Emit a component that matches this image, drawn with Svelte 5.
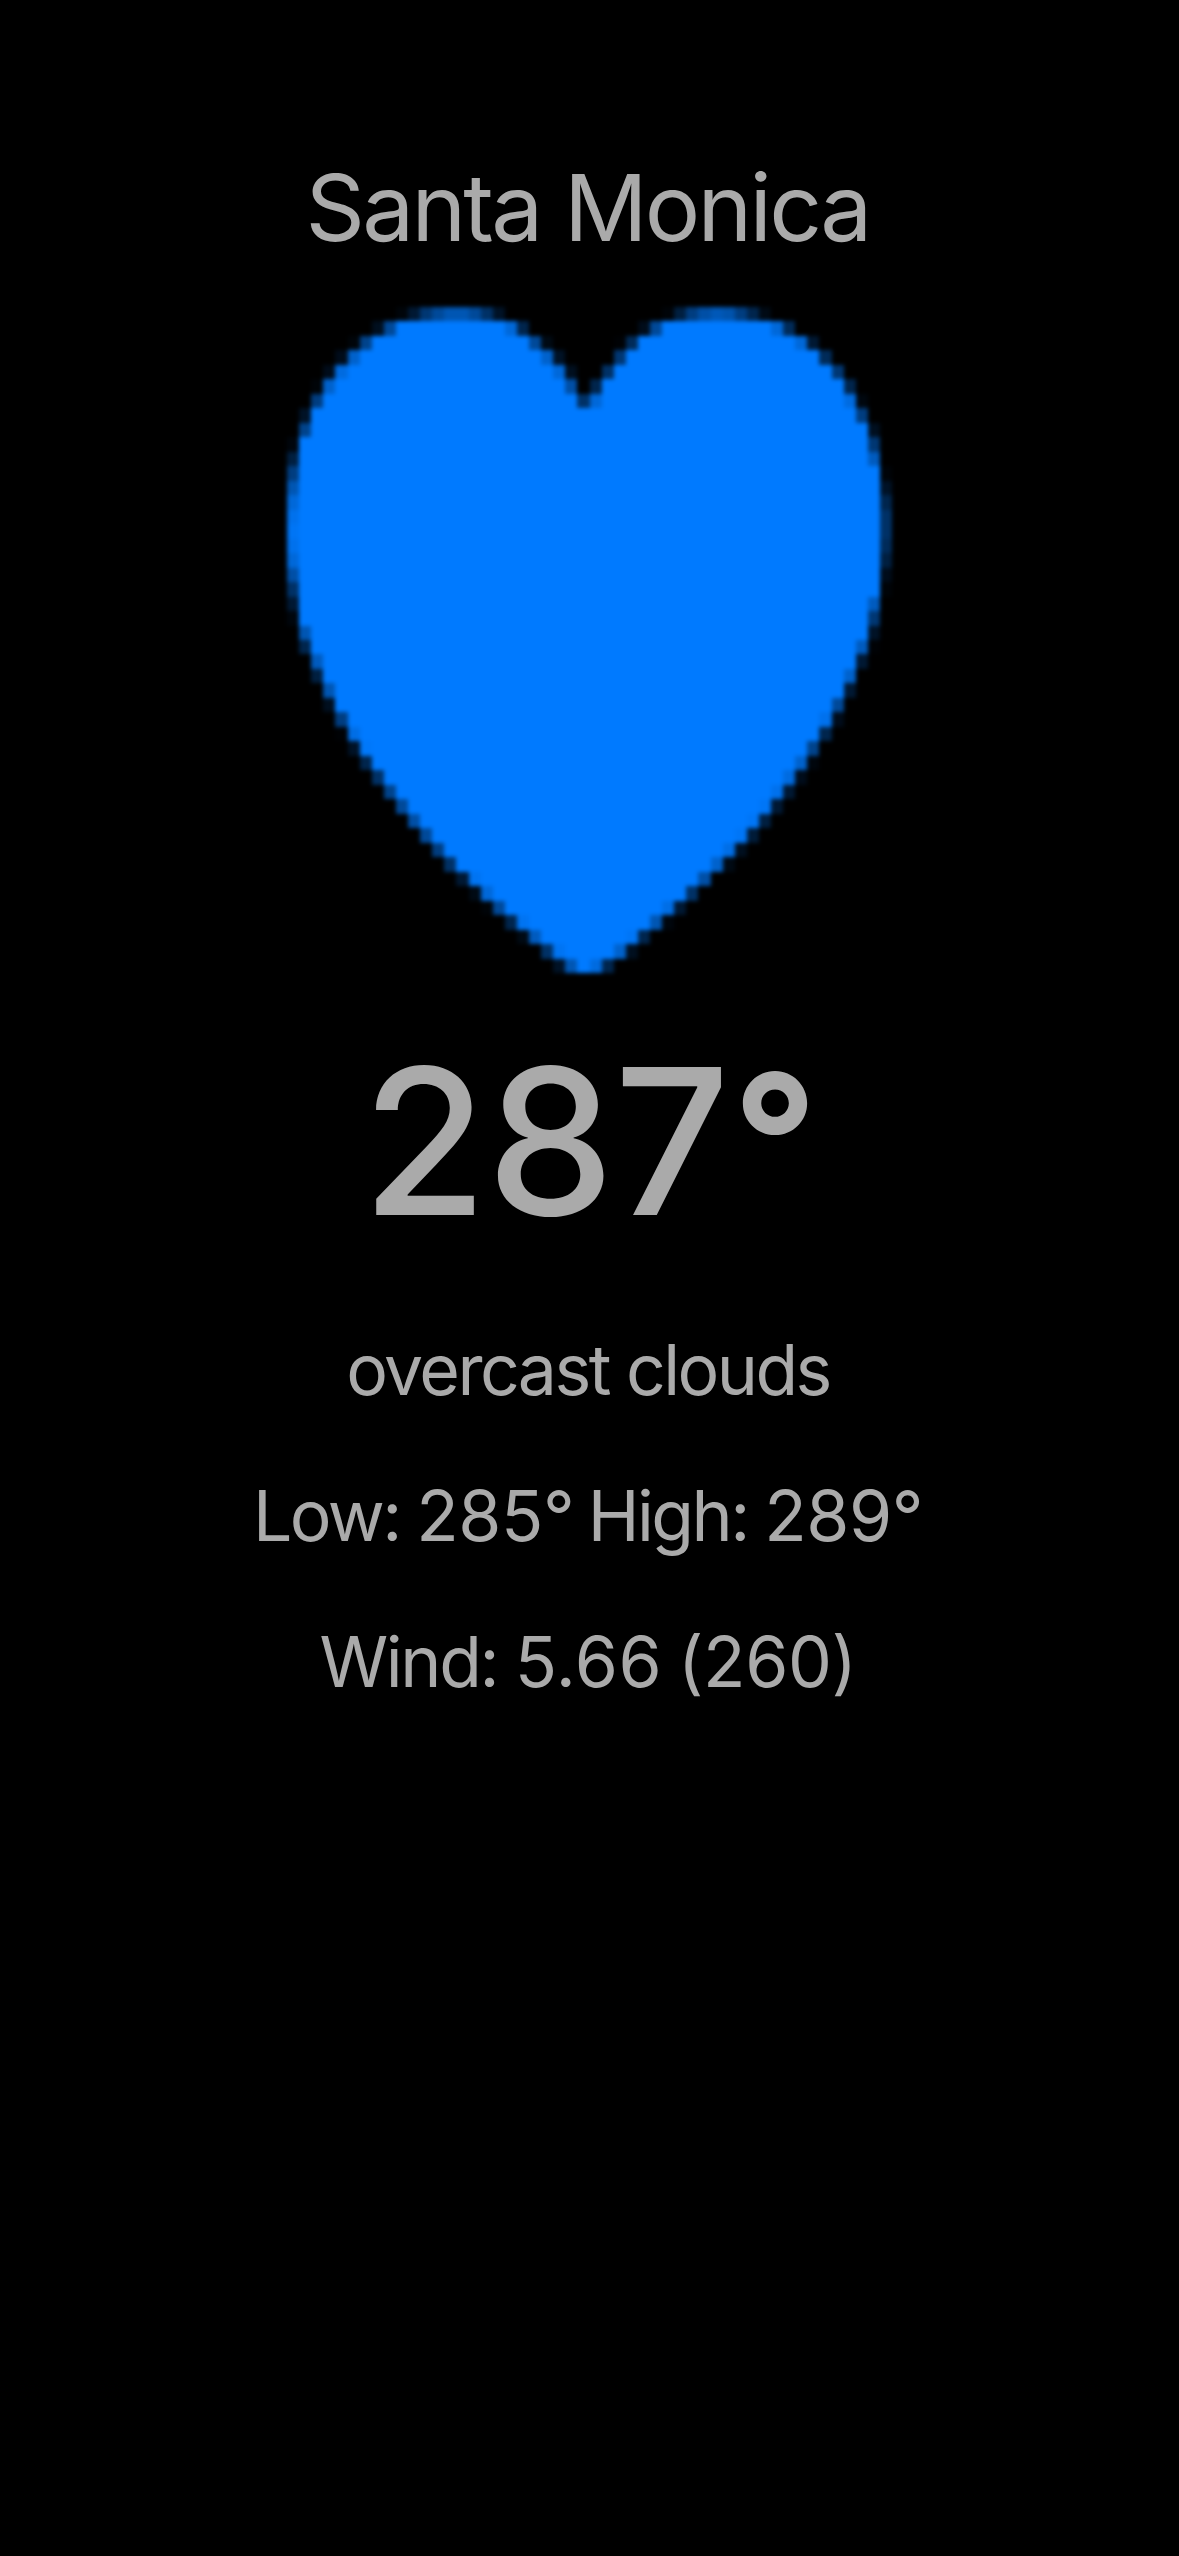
<script>
  const weather = {
    city: 'Santa Monica',
    temp: 287,
    summary: 'overcast clouds',
    low: 285,
    high: 289,
    wind: '5.66',
    bearing: 260,
  };

  // Low-resolution heart on a 50 x 46 grid. Each row holds spans of
  // [first column, leading edge opacities, end of solid run, trailing edge opacities].
  const rows = [
    [[9, [.04, .2, .45, .6, .7, .7, .6, .4, .15], 18, []], [31, [.03, .25, .5, .65, .72, .68, .5, .3, .08], 40, []]],
    [[7, [.12, .6], 18, [.85, .3]], [29, [.1, .6], 40, [.85, .35]]],
    [[5, [.04, .55], 20, [.6, .08]], [27, [.02, .35], 42, [.85, .2]]],
    [[4, [.1, .8], 21, [.8, .15]], [27, [.45], 44, [.35]]],
    [[3, [.1, .88], 22, [.85, .12]], [26, [.4], 45, [.45]]],
    [[2, [.03, .8], 23, [.65]], [25, [.3], 46, [.3]]],
    [[2, [.5], 24, [.4]], [25, [.85], 46, [.88, .06]]],
    [[1, [.15], 47, [.5]]],
    [[1, [.55], 48, [.12]]],
    [[0, [.05], 48, [.45]]],
    [[0, [.25], 48, [.75]]],
    [[0, [.5], 49, [.03]]],
    [[0, [.7], 49, [.15]]],
    [[0, [.85], 49, [.3]]],
    [[0, [.93], 49, [.4]]],
    [[0, [.96], 49, [.4]]],
    [[0, [.93], 49, [.35]]],
    [[0, [.85], 49, [.25]]],
    [[0, [.65], 49, [.1]]],
    [[0, [.4], 49, [.03]]],
    [[0, [.2], 48, [.75]]],
    [[0, [.05], 48, [.45]]],
    [[1, [.7], 48, [.15]]],
    [[1, [.3], 47, [.75, .02]]],
    [[2, [.75], 47, [.2]]],
    [[2, [.25], 46, [.8]]],
    [[3, [.7], 46, [.2]]],
    [[3, [.12], 45, [.6]]],
    [[4, [.5], 44, [.93, .1]]],
    [[4, [.02, .9], 44, [.3]]],
    [[5, [.15, .98], 43, [.55]]],
    [[6, [.3], 42, [.8, .05]]],
    [[7, [.4], 41, [.88, .1]]],
    [[8, [.55], 40, [.93, .2]]],
    [[9, [.6], 39, [.97, .2]]],
    [[10, [.65], 38, [.97, .25]]],
    [[11, [.6], 37, [.97, .22]]],
    [[12, [.5], 36, [.9, .12]]],
    [[13, [.4], 35, [.8, .08]]],
    [[14, [.2, .95], 34, [.65]]],
    [[15, [.08, .85], 32, [1, .4]]],
    [[16, [.03, .6], 31, [.9, .2]]],
    [[18, [.3, .95], 30, [.7, .05]]],
    [[19, [.08, .75], 28, [.97, .3]]],
    [[21, [.4, .95], 27, [.8, .12]]],
    [[22, [.15, .7], 25, [.88, .3]]],
  ];

  const cells = rows.flatMap((spans, y) =>
    spans.flatMap(([start, lead, end, trail]) => {
      const solid = start + lead.length;
      return [
        ...lead.map((a, i) => ({ x: start + i, y, w: 1, a })),
        ...(end > solid ? [{ x: solid, y, w: end - solid, a: 1 }] : []),
        ...trail.map((a, i) => ({ x: end + i, y, w: 1, a })),
      ];
    })
  );
</script>

<main class="screen">
  <h1 class="city">{weather.city}</h1>
  <svg class="heart" viewBox="0 0 50 46" preserveAspectRatio="none" aria-hidden="true">
    {#each cells as c}
      <rect x={c.x} y={c.y} width={c.w} height="1" fill-opacity={c.a} />
    {/each}
  </svg>
  <p class="temp">{weather.temp}<span class="degree">°</span></p>
  <div class="details">
    <p class="summary">{weather.summary}</p>
    <p class="range">Low: <span class="num low">{weather.low}°</span> High: <span class="num">{weather.high}°</span></p>
    <p class="wind">Wind: <span class="num decimal">{weather.wind}</span> <span class="num">({weather.bearing})</span></p>
  </div>
</main>

<style>
  :global(body) {
    background: #000;
  }

  .screen {
    box-sizing: border-box;
    min-height: 2556px;
    padding-top: 150px;
    display: flex;
    flex-direction: column;
    align-items: center;
    background: #000;
    color: #aaa;
    font-family: Inter, "Liberation Sans", sans-serif;
    font-kerning: normal;
  }

  h1,
  p {
    margin: 0;
    font-weight: 400;
    white-space: nowrap;
  }

  .city {
    padding-right: 4px;
    font-size: 92.6px;
    line-height: 115px;
    letter-spacing: -2.75px;
  }

  .heart {
    display: block;
    width: 605px;
    height: 666px;
    margin-top: 42px;
    fill: #007aff;
    shape-rendering: crispEdges;
    filter: blur(2px);
  }

  .temp {
    height: 250px;
    margin-top: 43px;
    font-size: 203px;
    line-height: 250px;
    font-weight: 500;
    letter-spacing: -0.5px;
  }

  .degree {
    margin-left: 3px;
    font-size: 185px;
    font-weight: 650;
    line-height: 0;
    vertical-align: 9px;
  }

  .details {
    margin-top: 31px;
    padding-right: 3px;
    text-align: center;
    font-size: 69.7px;
    line-height: 146px;
    letter-spacing: -2.55px;
  }

  .range {
    word-spacing: -0.6px;
  }

  .wind {
    letter-spacing: -2.3px;
  }

  .num {
    letter-spacing: -0.4px;
  }

  .low {
    margin-right: -3px;
  }

  .decimal {
    margin-right: -1.5px;
    letter-spacing: 0.6px;
  }
</style>
